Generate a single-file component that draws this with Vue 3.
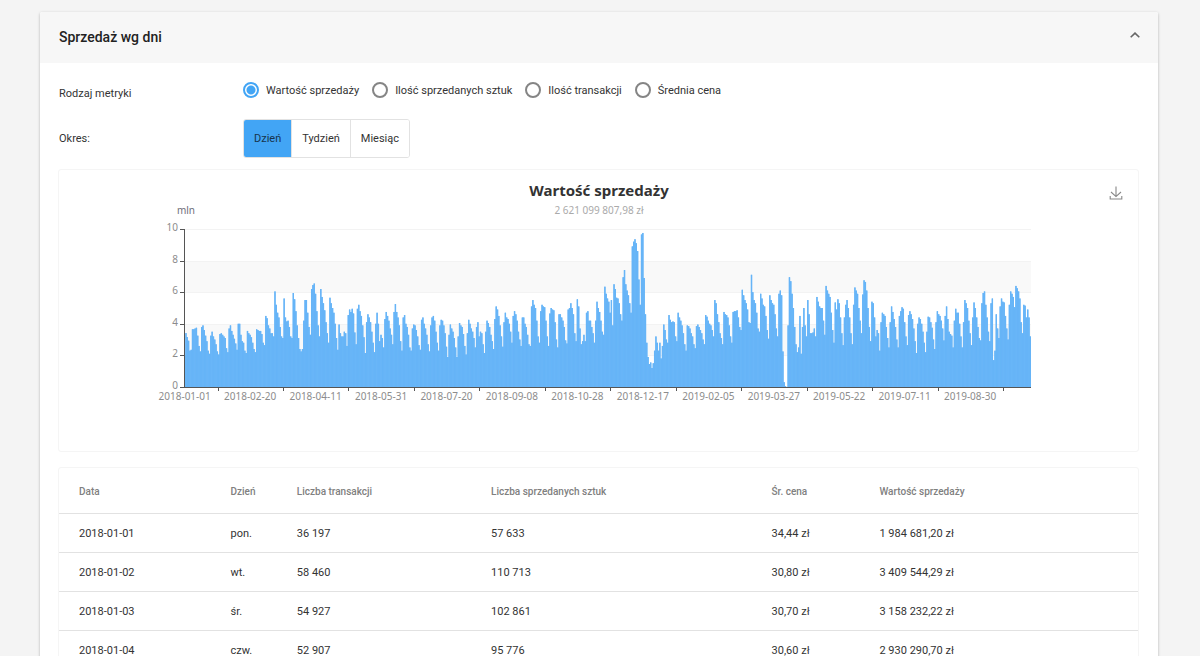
<script setup>
import { ref } from 'vue'

const open = ref(true)
const metric = ref('value')
const period = ref('day')

const metrics = [
  { id: 'value', label: 'Wartość sprzedaży' },
  { id: 'items', label: 'Ilość sprzedanych sztuk' },
  { id: 'transactions', label: 'Ilość transakcji' },
  { id: 'price', label: 'Średnia cena' },
]
const periods = [
  { id: 'day', label: 'Dzień' },
  { id: 'week', label: 'Tydzień' },
  { id: 'month', label: 'Miesiąc' },
]
const columns = ['Data', 'Dzień', 'Liczba transakcji', 'Liczba sprzedanych sztuk', 'Śr. cena', 'Wartość sprzedaży']
const rows = [
  ['2018-01-01', 'pon.', '36 197', '57 633', '34,44 zł', '1 984 681,20 zł'],
  ['2018-01-02', 'wt.', '58 460', '110 713', '30,80 zł', '3 409 544,29 zł'],
  ['2018-01-03', 'śr.', '54 927', '102 861', '30,70 zł', '3 158 232,22 zł'],
  ['2018-01-04', 'czw.', '52 907', '95 776', '30,60 zł', '2 930 290,70 zł'],
]

// Daily sales in millions, one line per week
const sales = `
2.0 3.41 3.16 2.93 2.3 2.35
3.65 3.65 3.7 3.75 3.25 2.6 2.25
3.8 3.9 3.6 3.25 2.9 2.3 2.1
3.25 3.5 3.2 3.0 2.7 2.25 2.05
3.35 3.4 3.3 3.2 3.1 2.45 2.2
3.7 3.9 3.55 3.3 3.05 2.75 2.35
4.0 4.0 3.3 2.9 2.8 2.3 2.15
3.55 3.4 3.3 3.15 2.8 2.4 2.2
3.65 3.6 3.55 3.55 3.35 2.8 2.65
4.5 4.35 3.9 3.7 3.4 3.4 3.2
6.05 5.2 4.7 4.4 3.8 3.2 3.1
5.6 4.4 4.15 4.2 3.8 3.2 3.1
5.95 5.55 4.8 3.9 3.1 2.4 2.25
2.4 4.2 5.5 5.5 4.7 3.8 3.3
6.2 6.45 6.55 5.9 4.8 3.9 3.2
6.2 5.7 5.3 4.85 4.1 3.4 2.8
5.65 5.3 5.0 4.7 4.0 3.1 2.35
3.95 3.4 3.2 3.2 3.5 3.4 2.6
4.55 4.9 4.75 4.95 4.65 3.45 2.7
4.95 5.2 4.8 4.5 3.9 3.15 2.15
4.1 4.6 4.4 4.1 3.5 2.8 2.2
4.0 4.7 4.0 2.9 3.3 3.1 2.5
4.3 4.75 4.5 4.2 3.7 3.3 2.7
4.75 5.25 4.75 4.4 3.9 2.9 2.3
4.4 4.55 4.0 3.8 3.3 2.5 2.3
3.7 3.95 3.9 3.6 3.2 2.65 2.35
4.25 4.4 4.0 3.7 3.3 2.7 2.25
3.9 4.4 4.5 4.2 3.5 2.8 2.3
3.9 4.25 4.2 3.9 3.4 2.55 1.9
3.3 3.95 3.7 3.5 3.1 2.5 1.9
3.2 4.05 3.9 3.8 3.35 2.6 2.05
3.4 4.25 4.0 3.7 3.5 3.1 2.5
3.8 4.1 3.2 3.5 3.4 2.7 2.15
3.5 4.2 4.05 3.8 3.3 2.9 2.4
4.3 5.1 4.9 4.5 3.9 3.2 2.55
4.1 4.7 4.4 4.3 4.0 3.5 2.8
4.5 4.8 4.6 4.2 3.5 3.0 2.6
4.4 4.4 4.0 3.8 3.3 2.7 2.6
5.1 5.5 5.2 5.0 4.2 3.2 2.8
4.8 5.2 5.1 5.05 4.2 3.2 2.6
4.65 5.0 4.9 4.85 4.1 3.0 2.5
4.6 4.6 4.4 4.2 3.8 2.95 2.75
4.9 5.0 5.3 5.0 4.6 3.4 2.9
5.55 5.1 3.7 2.7 2.9 3.3 2.9
4.7 4.8 4.2 4.2 3.8 3.4 2.8
4.2 5.4 5.0 4.75 4.2 3.5 3.3
6.35 5.9 5.6 5.4 4.7 5.5 3.9
6.5 6.2 5.65 5.6 5.3 4.6 4.2
6.95 7.4 6.5 6.1 5.8 5.3 4.7
8.9 9.2 9.35 9.1 8.6 6.8 5.2
9.65 9.75 6.9 4.6 2.8 1.9 1.45
1.55 1.2 1.5 2.3 3.2 2.8 2.3
2.8 1.8 2.6 3.95 3.6 3.0 2.8
4.55 4.25 4.1 4.15 4.1 3.2 2.9
4.7 4.4 4.2 3.9 3.4 2.7 2.3
3.9 3.85 3.7 3.4 3.2 2.7 2.45
3.85 3.95 3.8 3.6 3.4 3.0 2.7
4.55 4.45 4.2 4.0 3.9 3.6 3.2
5.5 5.3 4.6 4.1 3.4 3.1 2.7
4.75 4.6 4.55 4.4 3.9 3.2 2.8
4.75 4.8 4.8 4.85 4.4 3.8 3.6
6.15 5.8 5.5 5.3 4.9 4.1 4.05
7.1 6.0 5.5 5.3 4.7 3.7 3.5
5.9 5.6 5.2 5.1 4.5 3.6 3.05
5.8 5.5 5.3 5.2 4.6 3.7 3.2
5.9 6.1 5.8 2.25 0.3 0.05 0
3.9 6.95 6.7 5.9 5.0 3.8 2.7
2.2 2.5 4.5 2.1 3.8 5.0 3.9
3.2 5.5 4.6 3.4 3.4 3.45 3.7
3.2 5.7 5.4 5.1 5.0 5.0 4.2 3.3
6.4 6.1 5.9 5.7 4.7 3.6 2.8
5.35 4.9 5.55 5.3 4.4 3.4 2.65
4.4 5.2 5.5 5.0 4.4 3.4 2.7
5.2 6.3 6.1 5.9 5.0 4.2 3.4
5.85 6.75 6.65 6.1 5.0 3.8 2.9
5.4 5.3 4.4 3.2 3.6 3.4 2.3
4.1 4.7 4.6 4.5 3.8 3.1 2.5
4.1 5.1 4.75 4.3 3.8 3.0 2.5
4.5 4.8 5.05 4.95 4.1 3.2 2.65
4.55 4.8 4.6 4.3 3.7 2.9 2.15
4.0 4.4 4.3 4.0 3.5 2.8 2.2
3.5 4.45 4.4 4.1 3.75 3.0 2.4
4.1 4.8 4.6 4.5 4.2 3.7 2.95
4.5 5.1 4.3 3.5 3.35 3.25 2.5
4.2 4.95 4.7 4.7 4.0 3.2 2.5
4.1 5.5 5.3 5.0 4.2 3.4 2.65
4.4 5.35 5.0 4.4 3.8 3.1 2.95
5.3 5.95 6.05 5.2 4.4 3.5 2.9
5.3 5.6 1.7 2.3 4.6 3.7 3.1
5.1 5.6 5.4 5.35 4.5 3.7 3.0
5.2 6.05 5.9 5.7 5.05 6.4 6.25
6.05 5.6 4.1 3.4 5.2 5.15 4.4
4.9 4.4 3.2
`.trim().split(/\s+/).map(Number)

const plot = { left: 125, top: 59, width: 847, height: 158 }
const base = plot.top + plot.height
const step = plot.width / sales.length
const bars = sales.map((v, i) => ({
  x: plot.left + step * i,
  y: base - (v / 10) * plot.height,
  h: (v / 10) * plot.height,
}))
// Silhouette of all the bars, drawn under them so that no seams show through
const silhouette = `M${plot.left} ${base}` + bars.map((b) => `V${b.y.toFixed(2)}H${(b.x + step).toFixed(2)}`).join('') + `V${base}Z`
const yTicks = [0, 2, 4, 6, 8, 10].map((v) => ({ v, y: Math.round(base - (v / 10) * plot.height) }))
const dates = [
  '2018-01-01', '2018-02-20', '2018-04-11', '2018-05-31', '2018-07-20', '2018-09-08', '2018-10-28',
  '2018-12-17', '2019-02-05', '2019-03-27', '2019-05-22', '2019-07-11', '2019-08-30',
]
const xLabels = dates.map((text, i) => ({
  text,
  x: plot.left + step * (50 * i + 0.5),
  tick: Math.floor(plot.left + step * (50 * i + 26)),
}))
</script>

<template>
  <main class="page">
    <div class="previous"></div>
    <section class="panel">
      <header class="panel-head">
        <h2>Sprzedaż wg dni</h2>
        <button class="icon-btn" type="button" aria-label="Zwiń" :aria-expanded="open" @click="open = !open">
          <svg width="10" height="6" viewBox="0 0 10 6" fill="none" stroke="#666" stroke-width="1.6"><path d="M.7 5.3 5 1.1l4.3 4.2" /></svg>
        </button>
      </header>
      <div v-if="open" class="panel-body">
        <div class="field metric">
          <span id="metric-label" class="field-label">Rodzaj metryki</span>
          <div class="radios" role="radiogroup" aria-labelledby="metric-label">
            <label v-for="m in metrics" :key="m.id" class="radio">
              <input v-model="metric" type="radio" name="metric" :value="m.id" />
              <span>{{ m.label }}</span>
            </label>
          </div>
        </div>
        <div class="field">
          <span id="period-label" class="field-label">Okres:</span>
          <div class="toggle" role="group" aria-labelledby="period-label">
            <button
              v-for="p in periods"
              :key="p.id"
              type="button"
              :class="{ active: period === p.id }"
              :aria-pressed="period === p.id"
              @click="period = p.id"
            >{{ p.label }}</button>
          </div>
        </div>

        <div class="card chart-card">
          <button class="icon-btn download" type="button" aria-label="Pobierz">
            <svg width="14" height="14" viewBox="0 0 14 14" fill="none" stroke="#888" stroke-width="1.1"><path d="M7 .5v10M2 6l5 4.6L12 6M1.2 10v3h11.6v-3" /></svg>
          </button>
          <svg class="chart" viewBox="0 0 1079 281" role="img" aria-label="Wartość sprzedaży">
            <text class="title" x="540" y="26">Wartość sprzedaży</text>
            <text class="subtitle" x="540" y="44">2 621 099 807,98 zł</text>
            <text class="unit" x="127" y="44">mln</text>
            <rect class="band" :x="plot.left" :y="yTicks[4].y" :width="plot.width" :height="yTicks[3].y - yTicks[4].y" />
            <rect class="band" :x="plot.left" :y="yTicks[2].y" :width="plot.width" :height="yTicks[1].y - yTicks[2].y" />
            <g v-for="t in yTicks" :key="t.v">
              <rect class="grid" :x="plot.left" :y="t.y" :width="plot.width" height="1" />
              <rect class="axis" :x="plot.left - 4" :y="t.y" width="4" height="1" />
              <text class="y-label" :x="plot.left - 6" :y="t.y + 2">{{ t.v }}</text>
            </g>
            <path class="silhouette" :d="silhouette" />
            <rect v-for="(b, i) in bars" :key="i" class="bar" :x="b.x" :y="b.y" :width="step" :height="b.h" />
            <rect class="axis" :x="plot.left" :y="plot.top" width="1" :height="plot.height" />
            <rect class="axis" :x="plot.left" :y="base" :width="plot.width" height="1" />
            <g v-for="l in xLabels" :key="l.text">
              <rect class="axis" :x="l.tick" :y="base" width="1" height="4" />
              <text class="x-label" :x="l.x" :y="base + 13">{{ l.text }}</text>
            </g>
          </svg>
        </div>

        <div class="card">
          <table>
            <colgroup>
              <col class="c-date" /><col class="c-day" /><col class="c-trans" /><col class="c-items" /><col class="c-price" /><col />
            </colgroup>
            <thead>
              <tr><th v-for="c in columns" :key="c" scope="col">{{ c }}</th></tr>
            </thead>
            <tbody>
              <tr v-for="r in rows" :key="r[0]"><td v-for="(c, i) in r" :key="i">{{ c }}</td></tr>
            </tbody>
          </table>
        </div>
      </div>
    </section>
  </main>
</template>

<style>
body {
  margin: 0;
  background: #f4f4f4;
}
</style>

<style scoped>
.page {
  height: 100vh;
  overflow: hidden;
  box-sizing: border-box;
  padding: 0 42px 0 40px;
  font-family: Roboto, "Liberation Sans", sans-serif;
  font-size: 11px;
  color: #333;
}
.previous {
  height: 0;
  margin: 0 104px 12px;
  box-shadow: 0 0 3px rgba(0, 0, 0, 0.14);
}
.panel {
  background: #fff;
  border-radius: 2px;
  box-shadow: 0 1px 3px rgba(0, 0, 0, 0.28);
}
.panel-head {
  display: flex;
  align-items: center;
  justify-content: space-between;
  height: 51px;
  box-sizing: border-box;
  padding: 0 18px 0 19px;
  background: #f7f7f7;
  border-radius: 2px 2px 0 0;
}
h2 {
  margin: 0;
  padding-bottom: 2px;
  font-size: 14px;
  font-weight: 500;
  line-height: 18px;
  color: #222;
}
.icon-btn {
  display: flex;
  padding: 0;
  border: 0;
  background: none;
  cursor: pointer;
}
.panel-head .icon-btn {
  padding: 0 0 5px;
}
.panel-body {
  padding: 16px 19px 20px 18px;
}
.field {
  display: grid;
  grid-template-columns: 185px 1fr;
  align-items: center;
  margin-bottom: 11px;
}
.field-label {
  padding-left: 1px;
}
.metric {
  height: 28px;
  margin-bottom: 12px;
}
.radios {
  display: flex;
  gap: 13px;
  align-self: start;
  padding-top: 3px;
}
.radio {
  display: flex;
  align-items: center;
  gap: 7px;
}
.radio input {
  appearance: none;
  width: 16px;
  height: 16px;
  margin: 0;
  border: 2px solid #858585;
  border-radius: 50%;
}
.radio input:checked {
  border-color: #42a5f5;
  background: radial-gradient(circle, #42a5f5 4px, transparent 5px);
}
.toggle {
  display: flex;
  justify-self: start;
  border: 1px solid #e2e2e2;
  border-radius: 3px;
  overflow: hidden;
}
.toggle button {
  height: 37px;
  padding: 0 10px;
  border: 0;
  background: #fff;
  font: inherit;
  color: #333;
}
.toggle button + button {
  border-left: 1px solid #e2e2e2;
}
.toggle button.active {
  background: #42a5f5;
  color: #17344d;
}
.card {
  position: relative;
  border: 1px solid #f5f5f5;
  border-radius: 3px;
}
.chart-card {
  margin-bottom: 15px;
}
.chart {
  display: block;
  width: 100%;
  height: auto;
}
.download {
  position: absolute;
  top: 16px;
  right: 15px;
}
.chart text {
  font-family: "Noto Sans", "Open Sans", sans-serif;
  font-size: 10px;
  fill: #8c8c8c;
  text-anchor: middle;
}
.chart .title {
  font-size: 15px;
  font-weight: 700;
  fill: #333;
}
.chart .subtitle {
  fill: #aaa;
}
.chart .unit {
  fill: #6e7079;
}
.chart .y-label {
  text-anchor: end;
}
.band {
  fill: #f9f9f9;
}
.grid {
  fill: #f3f3f3;
}
.axis {
  fill: #555;
}
.silhouette {
  fill: #73bbf9;
}
.bar {
  fill: #66b4f7;
}
table {
  width: 100%;
  border-collapse: collapse;
  table-layout: fixed;
}
.c-date { width: 15.8%; }
.c-day { width: 6.15%; }
.c-trans { width: 18%; }
.c-items { width: 26%; }
.c-price { width: 10%; }
th,
td {
  padding: 0 0 0 1px;
  text-align: left;
}
th:first-child,
td:first-child {
  padding-left: 20px;
}
th {
  height: 44px;
  padding-top: 1px;
  font-size: 10px;
  font-weight: 500;
  color: #808080;
}
td {
  height: 38px;
  border-top: 1px solid #e2e2e2;
}
</style>
